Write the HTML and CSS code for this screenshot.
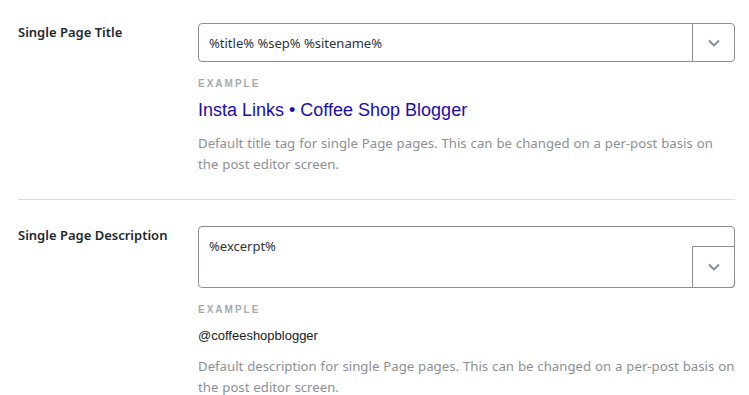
FILE: index.html
```html
<!DOCTYPE html>
<html lang="en">
<head>
  <meta charset="UTF-8" />
  <meta name="viewport" content="width=device-width, initial-scale=1.0"/>
  <title>Single Page Settings</title>
  <link rel="stylesheet" href="styles.css">
</head>
<body>

  <div class="settings">

    <div class="row">
      <div class="label">Single Page Title</div>
      <div class="field">
        <div class="input input-single">
          <div class="value">%title% %sep% %sitename%</div>
          <div class="toggle">
            <svg width="12" height="8" viewBox="0 0 12 8"><path d="M1 1.5 6 6.5 11 1.5" fill="none" stroke="#7d8a98" stroke-width="1.8"/></svg>
          </div>
        </div>
        <div class="example-head">Example</div>
        <div class="preview-title">Insta Links • Coffee Shop Blogger</div>
        <p class="help">Default title tag for single Page pages. This can be changed on a per-post basis on the post editor screen.</p>
      </div>
    </div>

    <div class="row">
      <div class="label">Single Page Description</div>
      <div class="field">
        <div class="input input-multi">
          <div class="value">%excerpt%</div>
          <div class="toggle">
            <svg width="12" height="8" viewBox="0 0 12 8"><path d="M1 1.5 6 6.5 11 1.5" fill="none" stroke="#7d8a98" stroke-width="1.8"/></svg>
          </div>
        </div>
        <div class="example-head">Example</div>
        <div class="preview-desc">@coffeeshopblogger</div>
        <p class="help">Default description for single Page pages. This can be changed on a per-post basis on the post editor screen.</p>
      </div>
    </div>

  </div>

</body>
</html>
```

FILE: styles.css
```css
body {
  font-family: 'Noto Sans', sans-serif;
  background-color: #fff;
  color: #23282d;
  margin: 0;
  padding: 0;
}

.settings {
  padding: 23px 14px 0 18px;
}

.row {
  display: flex;
  padding-bottom: 24px;
  border-bottom: 1px solid #dcdcde;
  margin-bottom: 26px;
}

.row:last-child {
  border-bottom: none;
}

.label {
  width: 180px;
  flex-shrink: 0;
  font-size: 13px;
  font-weight: 600;
  line-height: 18px;
}

.field {
  flex: 1;
}

.input {
  position: relative;
  border: 1px solid #8c8f94;
  border-radius: 4px;
  font-size: 13px;
  color: #2c3338;
}

.input-single {
  display: flex;
  height: 37px;
}

.input-single .value {
  flex: 1;
  padding: 10px 10px 9px;
  line-height: 18px;
}

.input-single .toggle {
  width: 41px;
  border-left: 1px solid #8c8f94;
  display: flex;
  align-items: center;
  justify-content: center;
}

.input-multi {
  height: 60px;
}

.input-multi .value {
  padding: 10px 10px;
  line-height: 18px;
}

.input-multi .toggle {
  position: absolute;
  right: -1px;
  bottom: -1px;
  width: 41px;
  height: 40px;
  border: 1px solid #8c8f94;
  border-radius: 0 0 4px 0;
  display: flex;
  align-items: center;
  justify-content: center;
}

.example-head {
  margin-top: 16px;
  font-family: 'Liberation Sans', Arial, sans-serif;
  font-size: 10px;
  font-weight: 700;
  letter-spacing: 2px;
  text-transform: uppercase;
  color: #a7aaad;
  line-height: 12px;
}

.preview-title {
  margin-top: 9px;
  font-family: 'Liberation Sans', Arial, sans-serif;
  font-size: 18px;
  color: #1a0dab;
  line-height: 22px;
}

.preview-desc {
  margin-top: 11px;
  font-family: 'Liberation Sans', Arial, sans-serif;
  font-size: 13px;
  color: #202124;
  line-height: 18px;
}

.help {
  margin: 12px 0 0;
  font-size: 13.2px;
  word-spacing: 0.5px;
  line-height: 21px;
  color: #8c8f94;
}

.preview-desc + .help {
  margin-top: 11px;
}
```
